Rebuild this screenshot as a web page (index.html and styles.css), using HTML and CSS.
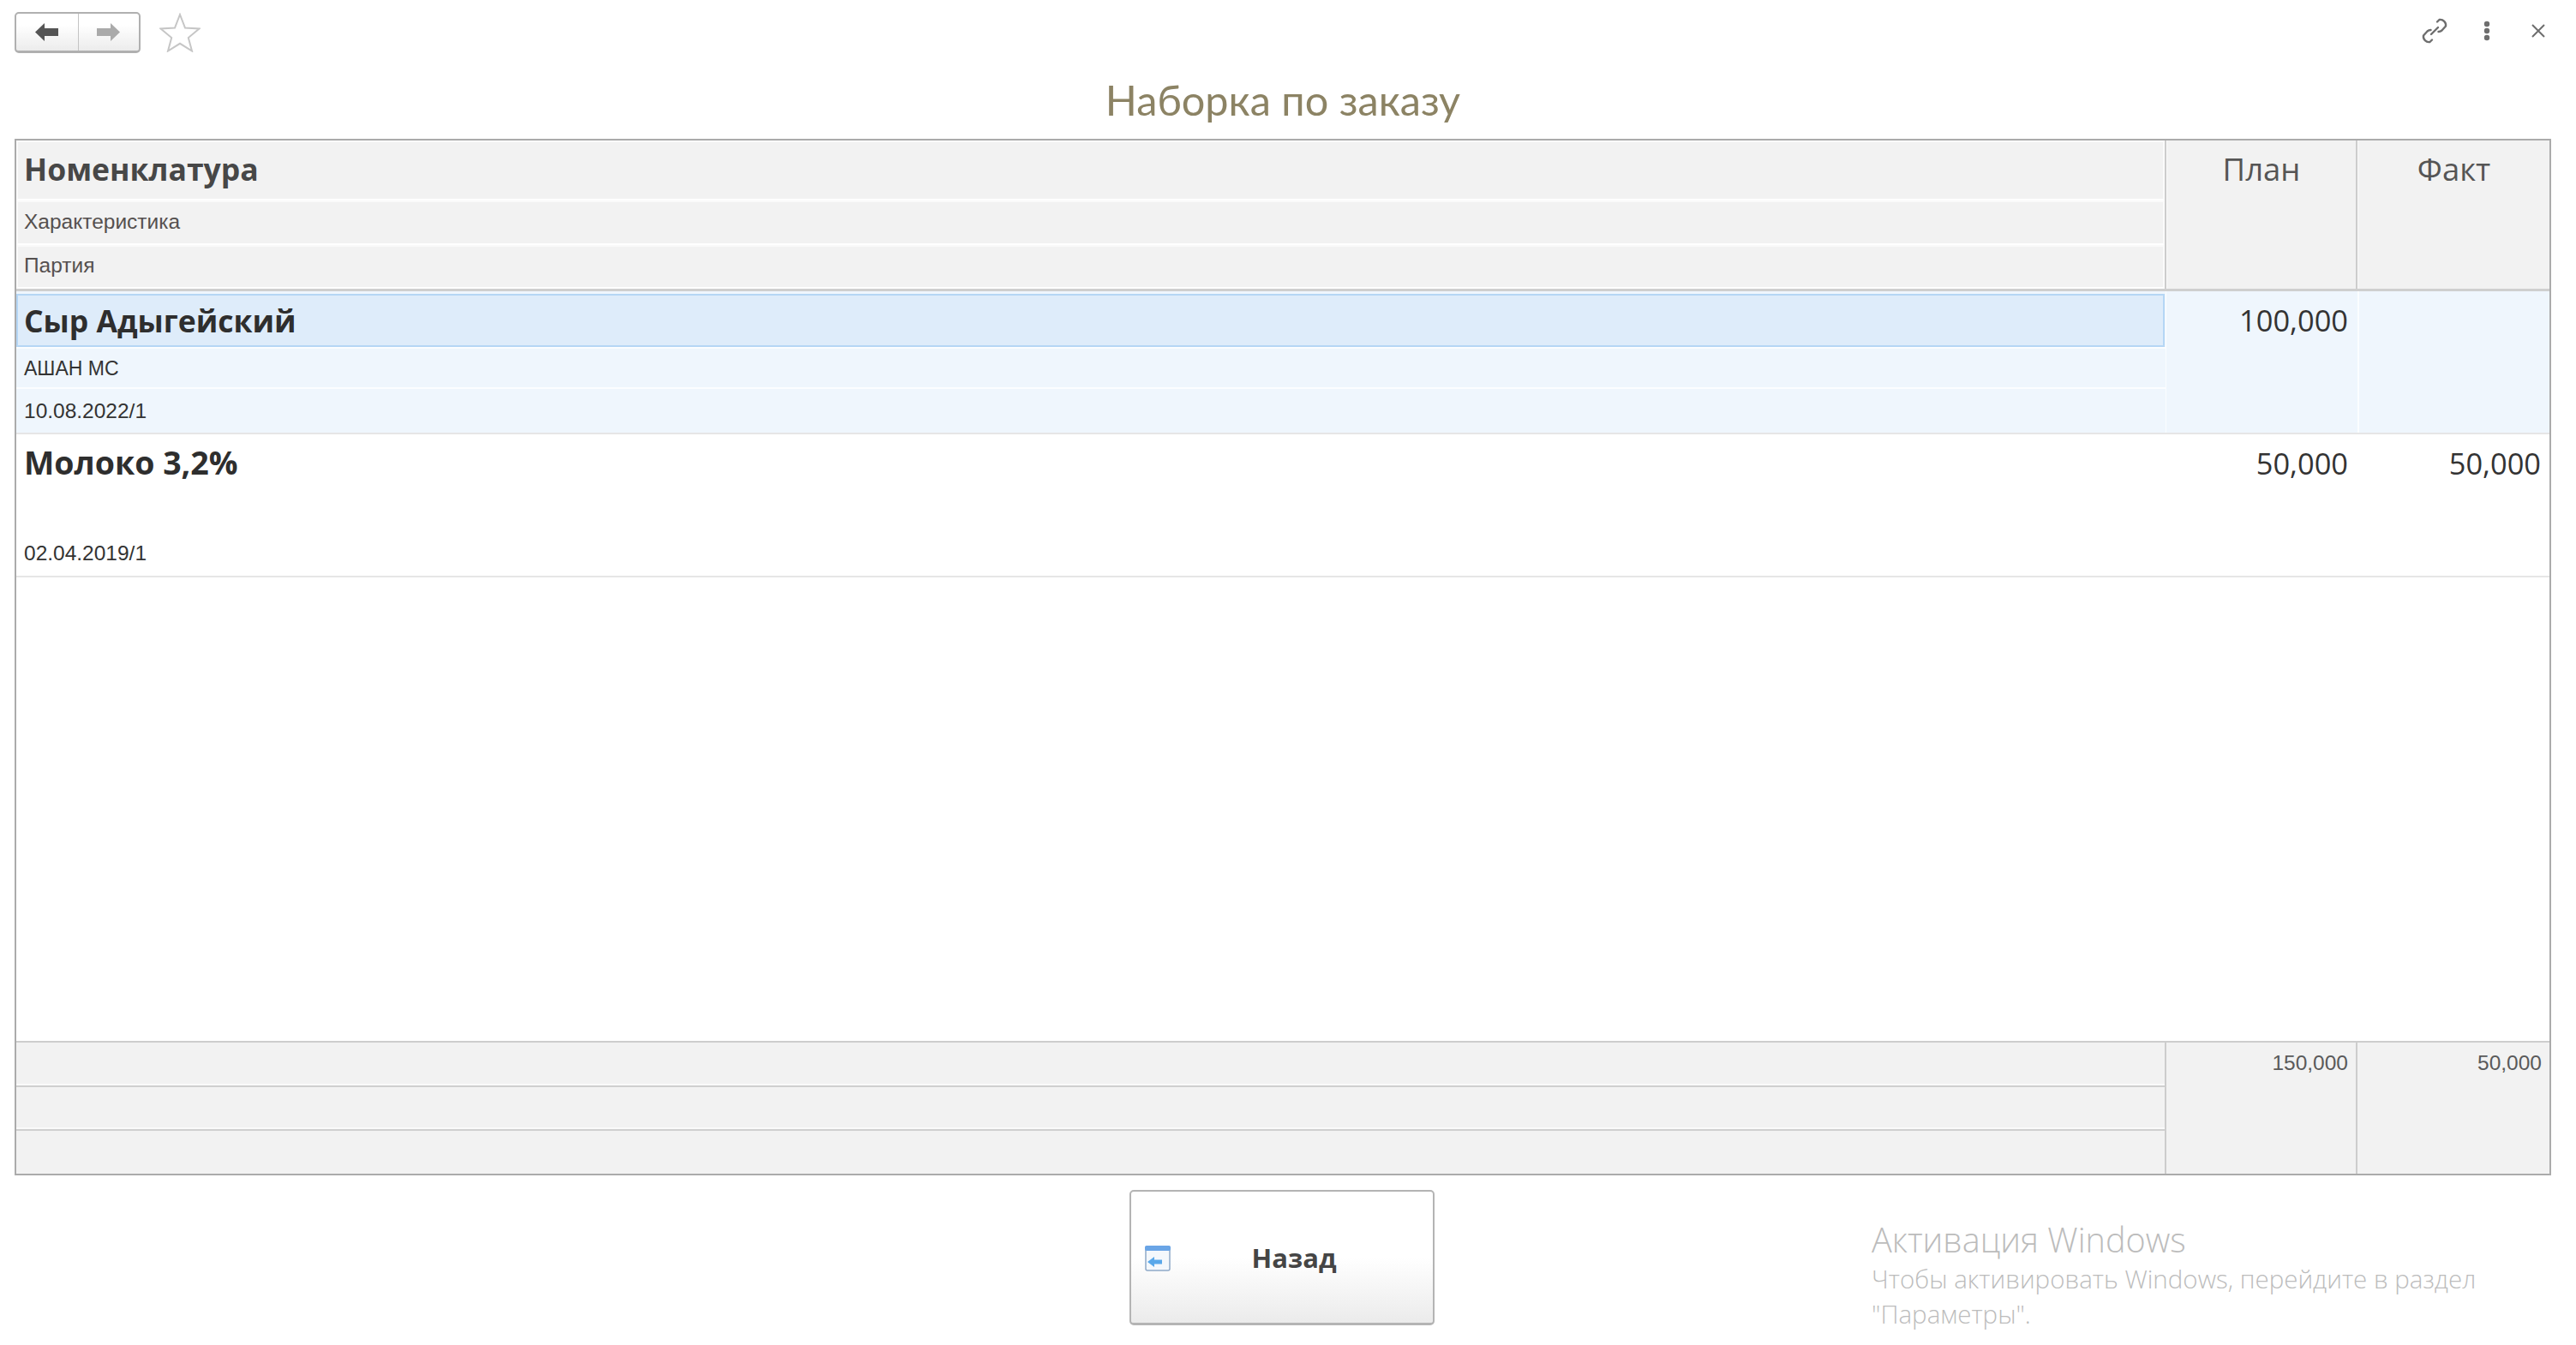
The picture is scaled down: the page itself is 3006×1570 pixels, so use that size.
FILE: index.html
```html
<!DOCTYPE html>
<html lang="ru">
<head>
<meta charset="utf-8">
<title>Наборка по заказу</title>
<link rel="stylesheet" href="styles.css">
</head>
<body>
<div class="page">
  <header class="toolbar">
    <div class="nav-left">
      <div class="nav-group">
        <button class="nav-btn nav-back" aria-label="Назад">
          <svg width="27" height="21" viewBox="0 0 27 21"><path d="M0 10.5 11 0V6H27V15H11V21Z" fill="#555"/></svg>
        </button>
        <button class="nav-btn nav-fwd" aria-label="Вперёд">
          <svg width="27" height="21" viewBox="0 0 27 21"><path d="M27 10.5 16 0V6H0V15H16V21Z" fill="#aaa"/></svg>
        </button>
      </div>
      <svg class="star" width="48" height="46" viewBox="0 0 48 46"><path d="M24 2 30 17.500 46.500 18.500 33.800 29 38 44.500 24 35.800 10 44.500 14.200 29 1.500 18.500 18 17.500Z" fill="none" stroke="#c6c6c6" stroke-width="2"/></svg>
    </div>
    <div class="nav-right">
      <svg width="32" height="32" viewBox="0 0 32 32" fill="none" stroke="#6e6e6e" stroke-width="2.400" stroke-linecap="round"><path d="M19 5.500 21.500 3a6.500 6.500 0 0 1 7.500 7.500L24.500 15.500a6 6 0 0 1-4 1.500"/><path d="M13 26.500 10.500 29A6.500 6.500 0 0 1 3 21.500L7.500 16.500a6 6 0 0 1 4-1.500"/><path d="M12 20 20 12"/></svg>
      <svg class="dots" width="8" height="24" viewBox="0 0 8 24" fill="#6e6e6e"><circle cx="4" cy="4" r="3.200"/><circle cx="4" cy="12" r="3.200"/><circle cx="4" cy="20" r="3.200"/></svg>
      <svg class="close" width="16" height="16" viewBox="0 0 16 16" stroke="#6e6e6e" stroke-width="2"><path d="M1 1 15 15M15 1 1 15"/></svg>
    </div>
  </header>

  <h1 class="title">Наборка по заказу</h1>

  <section class="table">
    <div class="row head">
      <div class="stack">
        <div class="cell main bold-head">Номенклатура</div>
        <div class="cell sub">Характеристика</div>
        <div class="cell sub last">Партия</div>
      </div>
      <div class="col-title">План</div>
      <div class="col-title">Факт</div>
    </div>

    <div class="row data selected">
      <div class="stack">
        <div class="cell name current">Сыр Адыгейский</div>
        <div class="cell info first company">АШАН МС</div>
        <div class="cell info">10.08.2022/1</div>
      </div>
      <div class="num">100,000</div>
      <div class="num"></div>
    </div>

    <div class="row data">
      <div class="stack">
        <div class="cell name wide">Молоко 3,2%</div>
        <div class="cell info first"></div>
        <div class="cell info">02.04.2019/1</div>
      </div>
      <div class="num">50,000</div>
      <div class="num">50,000</div>
    </div>

    <div class="spacer"></div>

    <div class="row foot">
      <div class="stack">
        <div class="cell foot-cell"></div>
        <div class="cell foot-cell"></div>
        <div class="cell foot-cell last"></div>
      </div>
      <div class="total">150,000</div>
      <div class="total">50,000</div>
    </div>
  </section>

  <footer class="actions">
    <button class="back-btn">
      <svg width="30" height="30" viewBox="0 0 30 30"><rect x="1" y="1" width="28" height="28" rx="2" fill="#f4f8fc" stroke="#8fa9c8" stroke-width="1.500"/><rect x="0" y="0" width="30" height="6" rx="2" fill="#6aa5e6"/><path d="M3 19 11 13V16.500H20V21.500H11V25Z" fill="#5aa8ea"/></svg>
      <span class="back-label">Назад</span>
    </button>
  </footer>

  <aside class="watermark">
    <div class="wm-title">Активация Windows</div>
    <div class="wm-text">Чтобы активировать Windows, перейдите в раздел<br>"Параметры".</div>
  </aside>
</div>
</body>
</html>
```

FILE: styles.css
```css
* { box-sizing: border-box; }
html, body { margin: 0; height: 100%; background: #fff; }
.page {
  position: relative;
  height: 1570px;
  padding: 0 29px 0 17px;
  display: flex;
  flex-direction: column;
  font-family: "Liberation Sans", Arial, sans-serif;
  overflow: hidden;
}

/* toolbar */
.toolbar {
  height: 80px;
  display: flex;
  justify-content: space-between;
  align-items: flex-start;
}
.nav-left { display: flex; align-items: flex-start; padding-top: 14px; }
.nav-group {
  width: 147px;
  height: 48px;
  display: flex;
  border: 2px solid #b0b0b0;
  border-bottom-width: 3px;
  border-radius: 5px;
  background: linear-gradient(#fff 30%, #ececec);
}
.nav-btn {
  border: 0;
  padding: 0;
  background: none;
  display: flex;
  align-items: center;
  justify-content: center;
}
.nav-back { width: 73px; border-right: 1px solid #c4c4c4; padding-right: 2px; }
.nav-fwd { flex: 1; padding-right: 1px; }
.star { margin: 1px 0 0 22px; }
.nav-right {
  display: flex;
  align-items: center;
  gap: 30px;
  padding: 20px 7px 0 0;
}
.dots { margin-left: 11px; }
.close { margin-left: 18px; }

/* title */
.title {
  margin: 0 0 10px;
  height: 72px;
  line-height: 72px;
  text-align: center;
  font-family: "Lato", sans-serif;
  font-weight: 400;
  font-size: 48.600px;
  color: #8c8364;
}

/* table */
.table {
  height: 1210px;
  display: flex;
  flex-direction: column;
  border: 2px solid #ababab;
  background: #fff;
}
.row {
  display: grid;
  grid-template-columns: 1fr 223px 224px;
}
.stack { display: flex; flex-direction: column; min-width: 0; }
.cell { display: flex; align-items: center; padding-left: 9px; min-width: 0; }

.head { height: 176px; background: #f2f2f2; border-bottom: 3px solid #cfcfcf; }
.head .stack { border-right: 2px solid #cdcdcd; }
.head .cell { border: 2px solid #fafafa; border-bottom-color: #fff; box-shadow: 0 2px 0 #cfcfcf; }
.head .cell.last { box-shadow: none; }
.main { height: 70px; padding: 0 0 4px 7px; }
.sub { height: 52px; flex: 1; font-size: 24.500px; color: #55504f; padding: 0 0 2px 7px; }
.bold-head {
  font-family: "Open Sans", sans-serif;
  font-weight: 700;
  font-size: 35.500px;
  color: #474747;
}
.col-title {
  border-right: 2px solid #cdcdcd;
  border-left: 1px solid #fafafa;
  text-align: center;
  padding-top: 10px;
  font-family: "Open Sans", sans-serif;
  font-size: 36.500px;
  line-height: 46px;
  color: #555;
}
.col-title:last-child { border-right: 0; }

.data { height: 167px; border-bottom: 2px solid #e6e6e6; }
.selected { background: #eff6fd; }
.name {
  height: 65px;
  font-family: "Open Sans", sans-serif;
  font-weight: 700;
  font-size: 35.500px;
  color: #2e2e2e;
  padding-left: 9px;
}
.wide { font-size: 37.500px; }
.current {
  margin-top: 3px;
  margin-right: 1px;
  height: 62px;
  background: #deecfa;
  border: 2px solid #b5d6f5;
  padding-left: 7px;
}
.selected .stack .info { border-top: 2px solid #fbfdff; }
.info { flex: 1; font-size: 24.500px; color: #333; }
.info.first { flex: 0 0 47px; padding-top: 2px; }
.company { font-size: 23px; }
.selected .stack { border-right: 1px solid #fbfdff; }
.selected .num + .num { border-left: 2px solid #fbfdff; }
.num {
  text-align: right;
  padding: 11px 11px 0 0;
  font-family: "Open Sans", sans-serif;
  font-size: 34.400px;
  line-height: 46px;
  color: #333;
}
.num:last-child { padding-right: 10px; }

.spacer { flex: 1; }

.foot {
  height: 155px;
  background: #f2f2f2;
  border-top: 2px solid #cdcdcd;
}
.foot .stack { border-right: 2px solid #cdcdcd; }
.foot-cell { flex: 1; border-bottom: 2px solid #cfcfcf; box-shadow: inset 0 -2px 0 #fafafa; }
.foot-cell.last { border-bottom: 0; box-shadow: none; }
.total {
  text-align: right;
  padding: 9px 9px 0 0;
  border-right: 2px solid #cdcdcd;
  font-size: 24.500px;
  line-height: 30px;
  color: #5a5a5a;
}
.total:last-child { border-right: 0; }

/* action bar */
.actions { display: flex; justify-content: center; padding: 17px 2px 0 0; }
.back-btn {
  width: 356px;
  height: 158px;
  padding: 2px 18px 0 16px;
  display: flex;
  align-items: center;
  border: 2px solid #b4b4b4;
  border-bottom-width: 3px;
  border-radius: 5px;
  background: linear-gradient(#fff 50%, #ebebeb);
}
.back-label {
  flex: 1;
  margin-top: -1px;
  font-family: "Open Sans", sans-serif;
  font-weight: 700;
  font-size: 31px;
  color: #454545;
}

/* OS overlay */
.watermark {
  position: absolute;
  left: 2184px;
  top: 1423px;
  font-family: "Open Sans", sans-serif;
  font-weight: 300;
  color: #bcbcbc;
}
.wm-title { font-size: 39.600px; line-height: 49px; }
.wm-text { font-size: 29.500px; line-height: 41px; }
```
